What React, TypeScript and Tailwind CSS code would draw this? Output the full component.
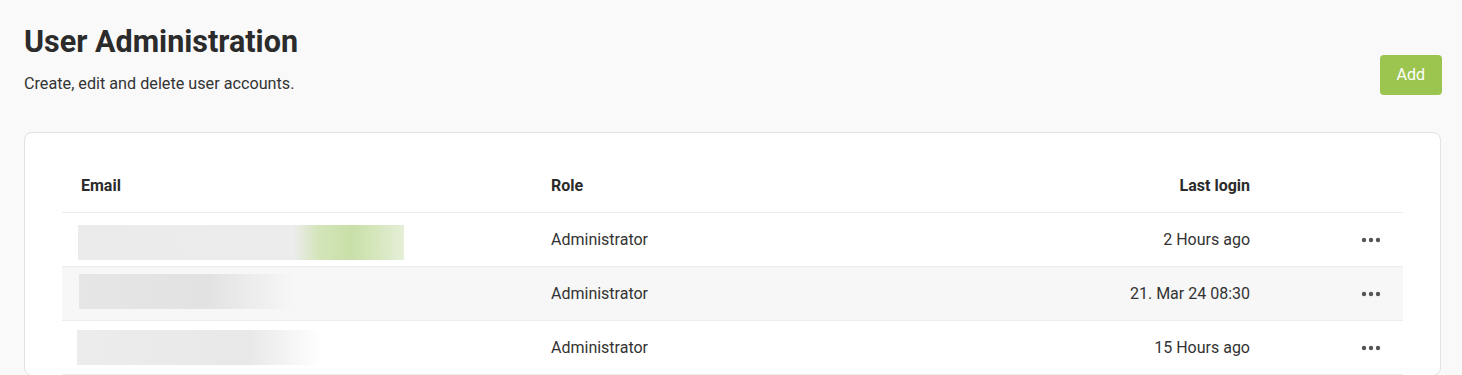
import React from 'react';

interface UserRow {
  id: number;
  role: string;
  lastLogin: string;
  mask: string;
}

// blurred e-mail placeholders, as in the original screenshot
const users: UserRow[] = [
  {
    id: 1,
    role: 'Administrator',
    lastLogin: '2 Hours ago',
    mask: 'mt-[12px] ml-[1px] w-[326px] bg-[linear-gradient(90deg,#ebebeb_0%,#ececec_66%,#d3e5b9_74%,#c9dfa8_84%,#d6e7be_92%,#e6efd8_100%)]',
  },
  {
    id: 2,
    role: 'Administrator',
    lastLogin: '21. Mar 24 08:30',
    mask: 'mt-[7px] ml-[2px] w-[215px] bg-[linear-gradient(90deg,#e6e6e6_0%,#e2e2e2_60%,#f7f7f7_100%)]',
  },
  {
    id: 3,
    role: 'Administrator',
    lastLogin: '15 Hours ago',
    mask: 'mt-[9px] w-[245px] bg-[linear-gradient(90deg,#ececec_0%,#e8e8e8_70%,#ffffff_100%)]',
  },
];

function Dots() {
  return (
    <svg width="20" height="6" viewBox="0 0 20 6" className="text-[#555]">
      <circle cx="3" cy="3" r="2.2" fill="currentColor" />
      <circle cx="10" cy="3" r="2.2" fill="currentColor" />
      <circle cx="17" cy="3" r="2.2" fill="currentColor" />
    </svg>
  );
}

export default function App() {
  return (
    <div className="min-h-screen bg-[#f9f9f9] font-['Roboto',sans-serif] text-[#333] px-6 pt-[24px]">
      {/* Header */}
      <div className="flex items-end justify-between">
        <div>
          <h1 className="text-[30.5px] leading-[36px] font-bold text-[#2b2b2b]">User Administration</h1>
          <p className="mt-[14px] text-[16.2px] leading-[20px] text-[#333]">Create, edit and delete user accounts.</p>
        </div>
        <button className="mr-[-4px] mb-[-1px] h-10 px-[17px] rounded bg-[#9bc54f] text-white text-[16px]">
          Add
        </button>
      </div>

      {/* Card */}
      <div className="mt-[38px] mr-[-3px] bg-white border border-[#e2e2e2] rounded-lg px-[37px] pt-[26px]">
        <div className="grid grid-cols-[470px_1fr_320px_134px] h-[54px] items-center font-bold text-[16px] text-[#2b2b2b] border-b border-[#ececec]">
          <div className="pl-[19px]">Email</div>
          <div className="pl-[19px]">Role</div>
          <div className="pr-[19px] text-right">Last login</div>
          <div />
        </div>
        {users.map((u, i) => (
          <div
            key={u.id}
            className={`grid grid-cols-[470px_1fr_320px_134px] h-[54px] items-center text-[16px] border-b border-[#ececec] ${
              i === 1 ? 'bg-[#f7f7f7]' : 'bg-white'
            }`}
          >
            <div className="self-start pl-[15px]">
              <div className={`h-[35px] ${u.mask}`} />
            </div>
            <div className="pl-[19px]">{u.role}</div>
            <div className="pr-[19px] text-right">{u.lastLogin}</div>
            <div className="flex justify-end pr-[22px]">
              <Dots />
            </div>
          </div>
        ))}
      </div>
    </div>
  );
}
